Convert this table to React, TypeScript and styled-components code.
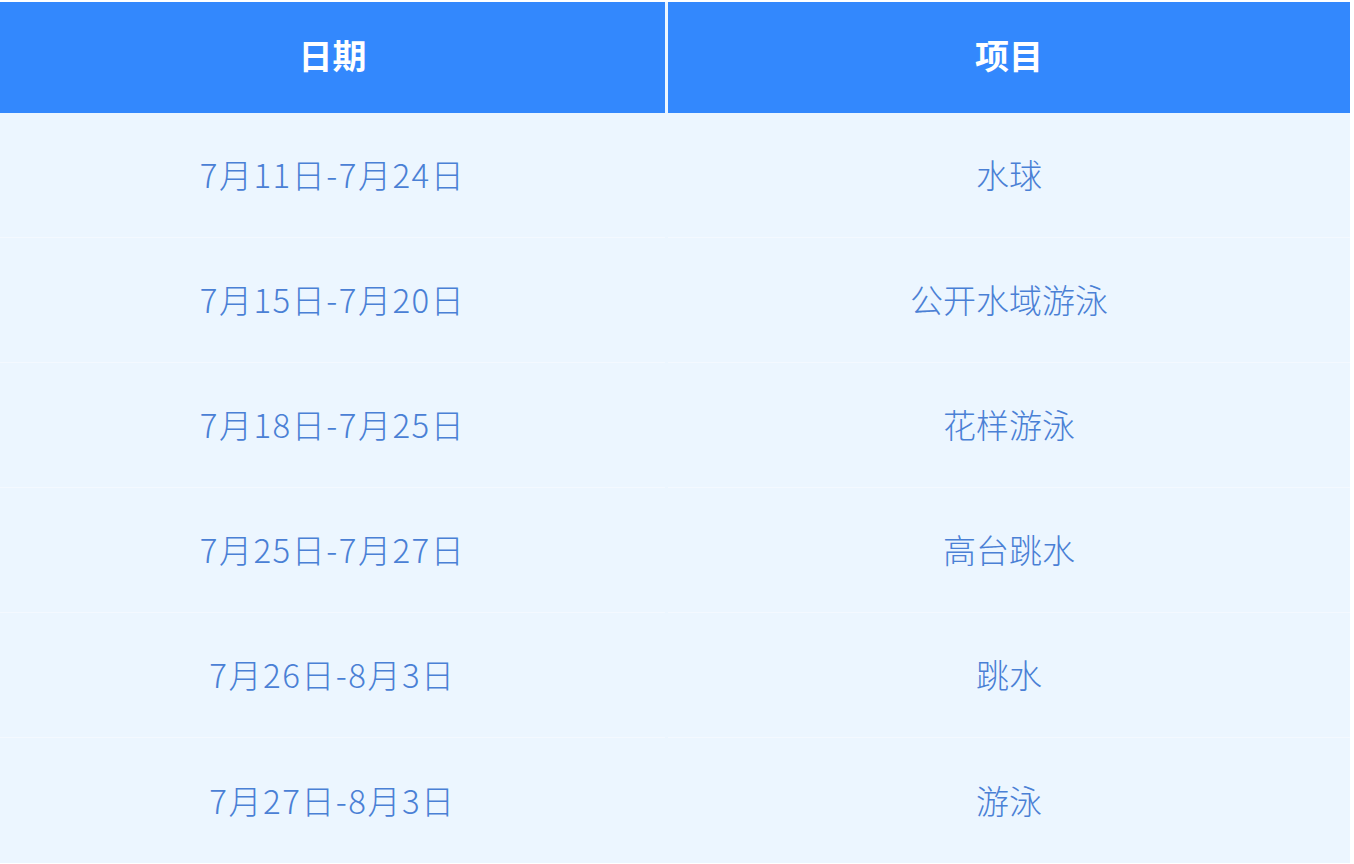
import React from "react";
import styled, { createGlobalStyle } from "styled-components";

const Global = createGlobalStyle`
  html, body { margin: 0; padding: 0; background: #ffffff; }
  body { font-family: "Noto Sans CJK SC", "Noto Sans", sans-serif; }
`;

const Page = styled.div`
  width: 1354px;
  height: 864px;
  padding: 2px 4px 0 0;
  box-sizing: border-box;
  background: #ffffff;
  overflow: hidden;
`;

const Table = styled.div`
  display: grid;
  grid-template-columns: 665px 1fr;
  grid-template-rows: 111px repeat(6, 125px);
  column-gap: 3px;
  background: #ecf6ff;
`;

const HeadCell = styled.div`
  background: #3388fd;
  color: #ffffff;
  font-weight: 700;
  font-size: 34px;
  display: flex;
  align-items: center;
  justify-content: center;
  padding-bottom: 6px;
  box-sizing: border-box;
`;

const Cell = styled.div<{ $last?: boolean; $date?: boolean }>`
  background: #ecf6ff;
  color: #4a80d5;
  font-weight: 300;
  font-size: 33px;
  letter-spacing: ${(p) => (p.$date ? "1.5px" : "0")};
  display: flex;
  align-items: center;
  justify-content: center;
  border-bottom: ${(p) => (p.$last ? "none" : "1px solid #f4f9ff")};
  box-sizing: border-box;
  padding-bottom: 2px;
`;

const rows: [string, string][] = [
  ["7月11日-7月24日", "水球"],
  ["7月15日-7月20日", "公开水域游泳"],
  ["7月18日-7月25日", "花样游泳"],
  ["7月25日-7月27日", "高台跳水"],
  ["7月26日-8月3日", "跳水"],
  ["7月27日-8月3日", "游泳"],
];

export default function App() {
  return (
    <>
      <Global />
      <Page>
        <Table>
          <HeadCell>日期</HeadCell>
          <HeadCell>项目</HeadCell>
          {rows.map(([d, p], i) => (
            <React.Fragment key={i}>
              <Cell $date $last={i === rows.length - 1}>{d}</Cell>
              <Cell $last={i === rows.length - 1}>{p}</Cell>
            </React.Fragment>
          ))}
        </Table>
      </Page>
    </>
  );
}
